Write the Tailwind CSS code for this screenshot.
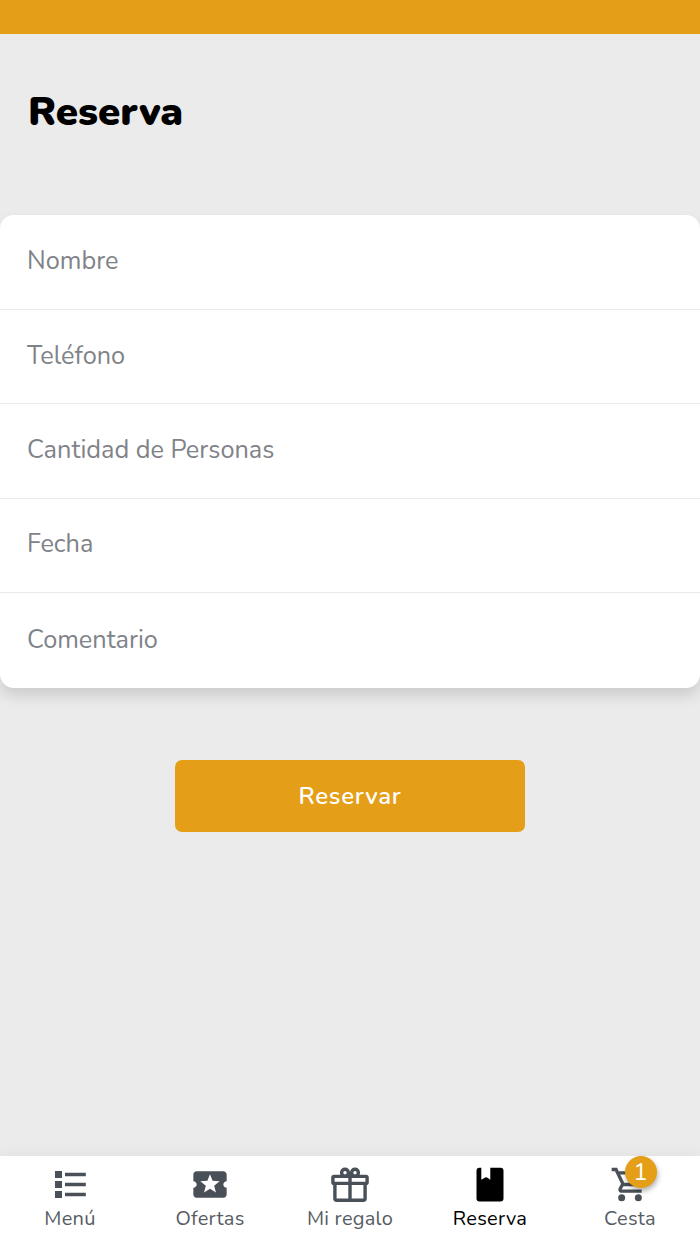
<!DOCTYPE html>
<html lang="es">
<head>
<meta charset="utf-8">
<title>Reserva</title>
<script src="https://cdn.jsdelivr.net/npm/@tailwindcss/browser@4"></script>
</head>
<body class="bg-[#ebebeb] font-[Nunito,Lato,'Open_Sans',sans-serif]">
<div class="flex h-[1244px] w-[700px] flex-col overflow-hidden">
  <div class="h-[34px] shrink-0 bg-[#e59e17]"></div>
  <h1 class="h-[180.5px] shrink-0 pt-[52px] pl-7 text-[40.2px] leading-[52px] font-black text-black">Reserva</h1>
  <form class="flex h-[473.5px] shrink-0 flex-col divide-y divide-[#e9e9e9] rounded-[14px] bg-white text-[25.3px] leading-9 font-normal text-[#7f8388] shadow-[0_8px_14px_rgba(0,0,0,0.13)]">
    <label class="flex h-[95px] items-center pb-[2px] pl-[27px]"><span>Nombre</span></label>
    <label class="flex h-[94.6px] items-center pb-px pl-[27px]"><span>Teléfono</span></label>
    <label class="flex h-[94.6px] items-center pb-px pl-[27px]"><span>Cantidad de Personas</span></label>
    <label class="flex h-[94.6px] items-center pb-[2px] pl-[27px]"><span>Fecha</span></label>
    <label class="flex flex-1 items-center pb-[2px] pl-[27px]"><span>Comentario</span></label>
  </form>
  <button type="button" class="mt-[71.5px] h-[72.5px] w-[350px] shrink-0 self-center rounded-[7px] bg-[#e59e17] text-2xl font-semibold tracking-[0.75px] text-white">Reservar</button>
  <nav class="mt-auto grid h-[88px] shrink-0 grid-cols-5 bg-white text-[20px] leading-6 font-normal tracking-[0.25px] text-[#565c63] shadow-[0_0_16px_rgba(0,0,0,0.06)]">
    <a class="flex flex-col items-center pt-2">
      <svg class="h-[41px] w-10 text-[#495057]" viewBox="0 0 40 41" fill="currentColor"><path d="M5 7h7v7H5zM5 17h7v7H5zM5 27h7v7H5zM15 8.8h20.8v3.4H15zM15 18.8h20.8v3.4H15zM15 28.8h20.8v3.4H15z"/></svg>
      <span class="mt-[2px]">Menú</span>
    </a>
    <a class="flex flex-col items-center pt-2">
      <svg class="h-[41px] w-10 text-[#495057]" viewBox="0 0 24 24" fill="currentColor"><path d="M20 12c0-1.1.9-2 2-2V6c0-1.1-.9-2-2-2H4c-1.1 0-1.99.9-1.99 2v4c1.1 0 1.99.9 1.99 2s-.89 2-2 2v4c0 1.1.9 2 2 2h16c1.1 0 2-.9 2-2v-4c-1.1 0-2-.9-2-2zm-4.42 4.8L12 14.5l-3.58 2.3 1.08-4.12-3.29-2.69 4.24-.25L12 5.8l1.54 3.95 4.24.25-3.29 2.69 1.09 4.11z"/></svg>
      <span class="mt-[2px]">Ofertas</span>
    </a>
    <a class="flex flex-col items-center pt-2">
      <svg class="h-[41px] w-10 text-[#495057]" viewBox="0 0 40 41" fill="none" stroke="currentColor" stroke-width="3.4"><rect x="2.9" y="12.4" width="34.2" height="7" rx="1.2"/><path d="M4.9 19.5V34.5q0 1.7 1.7 1.7h26.8q1.7 0 1.7-1.7V19.5M20 9v27.2"/><circle cx="15" cy="8.7" r="3.4"/><circle cx="25" cy="8.7" r="3.4"/></svg>
      <span class="mt-[2px]">Mi regalo</span>
    </a>
    <a class="flex flex-col items-center pt-2 text-black">
      <svg class="h-[41px] w-10" viewBox="0 0 40 41" fill="currentColor"><path d="M9.2 3.7h2.1v12l3-1.6q1-.9 1.8-.9t1.8.9l2.4 1.6V3.7h10.2q3 0 3 3v27.8q0 3-3 3H9.5q-3 0-3-3V6.7q0-3 3-3z"/></svg>
      <span class="mt-[2px]">Reserva</span>
    </a>
    <a class="relative flex flex-col items-center pt-2">
      <svg class="h-[41px] w-10 text-[#495057]" viewBox="0 0 24 24" fill="currentColor"><path d="M15.55 13c.75 0 1.41-.41 1.75-1.03l3.58-6.49A.996.996 0 0 0 20.01 4H5.21l-.94-2H1v2h2l3.6 7.59-1.35 2.44C4.52 15.37 5.48 17 7 17h12v-2H7l1.1-2h7.45zM6.16 6h12.15l-2.76 5H8.53L6.16 6z"/><circle cx="7" cy="20" r="2.1"/><circle cx="17" cy="20" r="2.1"/></svg>
      <span class="mt-[2px]">Cesta</span>
      <span class="absolute top-0 left-[65px] flex size-8 items-center justify-center rounded-full bg-[#e59e17] pr-px text-2xl tracking-normal text-white shadow-[1px_3px_5px_rgba(0,0,0,0.3)]">1</span>
    </a>
  </nav>
</div>
</body>
</html>
